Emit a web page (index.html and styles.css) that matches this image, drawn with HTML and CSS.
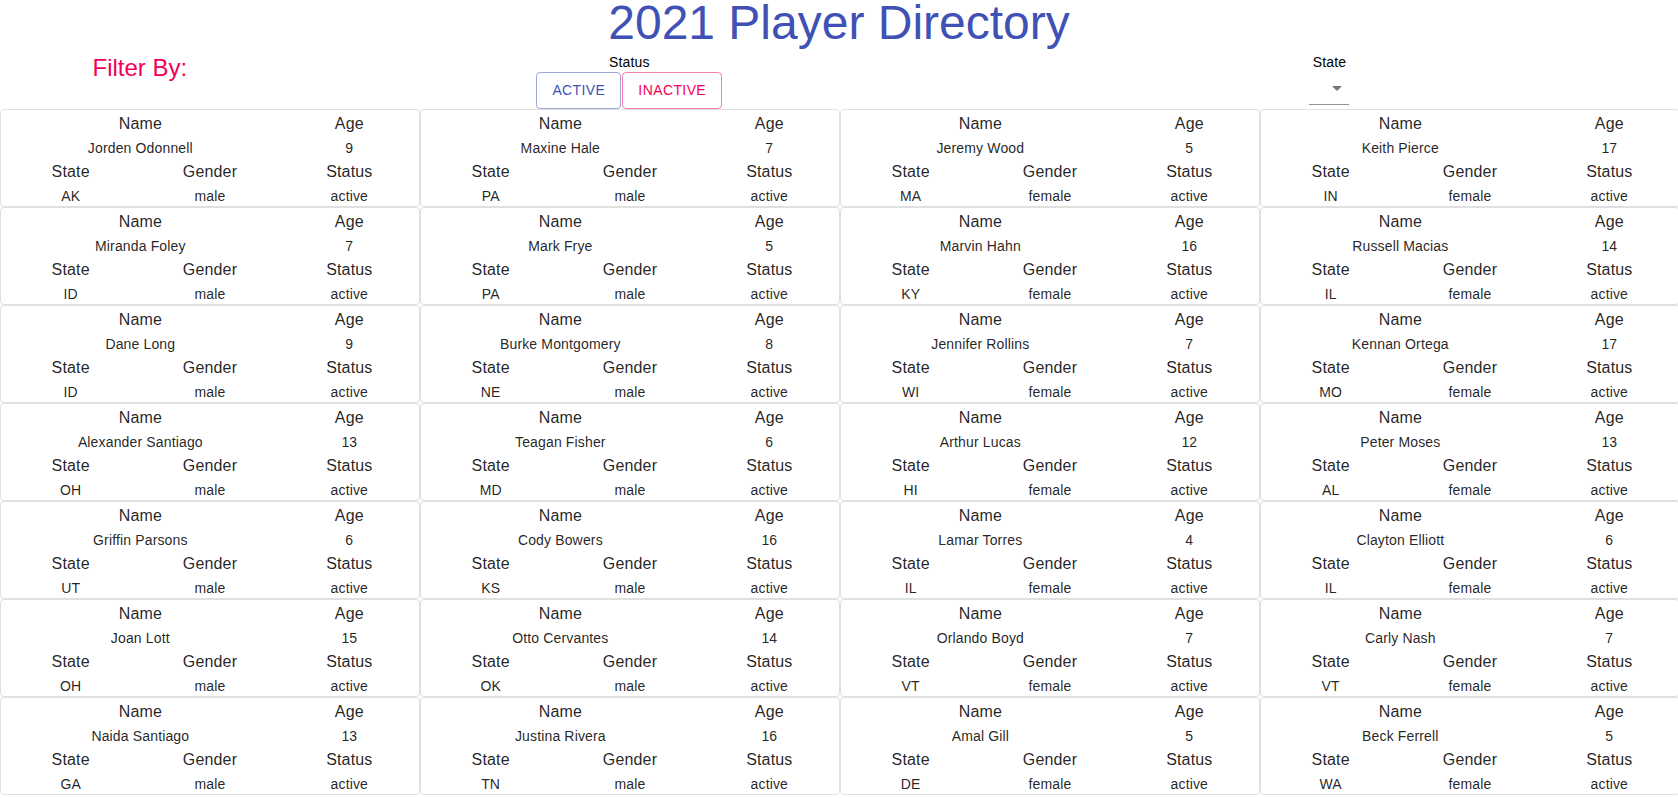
FILE: index.html
```html
<!DOCTYPE html>
<html lang="en">
<head>
<meta charset="utf-8">
<title>2021 Player Directory</title>
<link rel="stylesheet" href="styles.css">
</head>
<body>
<h1 class="title">2021 Player Directory</h1>
<div class="filters">
  <div class="filter-col">
    <div class="filter-by">Filter By:</div>
  </div>
  <div class="filter-col">
    <div class="filter-label">Status</div>
    <div class="btn-row">
      <button class="btn btn-primary">ACTIVE</button>
      <button class="btn btn-secondary">INACTIVE</button>
    </div>
  </div>
  <div class="filter-col state-col">
    <div class="filter-label">State</div>
    <div class="select">
      <svg class="select-icon" viewBox="0 0 24 24" width="24" height="24"><path d="M7 10l5 5 5-5z"/></svg>
    </div>
  </div>
</div>
<div class="cards" id="cards"></div>
<script src="app.js"></script>
</body>
</html>
```
FILE: app.js
```js
var players = [
  ["Jorden Odonnell",9,"AK","male"],["Maxine Hale",7,"PA","male"],["Jeremy Wood",5,"MA","female"],["Keith Pierce",17,"IN","female"],
  ["Miranda Foley",7,"ID","male"],["Mark Frye",5,"PA","male"],["Marvin Hahn",16,"KY","female"],["Russell Macias",14,"IL","female"],
  ["Dane Long",9,"ID","male"],["Burke Montgomery",8,"NE","male"],["Jennifer Rollins",7,"WI","female"],["Kennan Ortega",17,"MO","female"],
  ["Alexander Santiago",13,"OH","male"],["Teagan Fisher",6,"MD","male"],["Arthur Lucas",12,"HI","female"],["Peter Moses",13,"AL","female"],
  ["Griffin Parsons",6,"UT","male"],["Cody Bowers",16,"KS","male"],["Lamar Torres",4,"IL","female"],["Clayton Elliott",6,"IL","female"],
  ["Joan Lott",15,"OH","male"],["Otto Cervantes",14,"OK","male"],["Orlando Boyd",7,"VT","female"],["Carly Nash",7,"VT","female"],
  ["Naida Santiago",13,"GA","male"],["Justina Rivera",16,"TN","male"],["Amal Gill",5,"DE","female"],["Beck Ferrell",5,"WA","female"]
];
var html = "";
players.forEach(function (p) {
  html += '<div class="card">' +
    '<div class="h span2">Name</div><div class="h">Age</div>' +
    '<div class="v span2">' + p[0] + '</div><div class="v">' + p[1] + '</div>' +
    '<div class="h">State</div><div class="h">Gender</div><div class="h">Status</div>' +
    '<div class="v">' + p[2] + '</div><div class="v">' + p[3] + '</div><div class="v">active</div>' +
    '</div>';
});
document.getElementById("cards").innerHTML = html;
```
FILE: styles.css
```css
html, body {
  overflow: hidden;
}
body {
  margin: 0;
  font-family: "Liberation Sans", Arial, Helvetica, sans-serif;
  color: rgba(0, 0, 0, 0.87);
  background: #fff;
}
.title {
  margin: 0;
  font-size: 48px;
  line-height: 46px;
  font-weight: 400;
  text-align: center;
  color: #3f51b5;
}
.filters {
  display: grid;
  grid-template-columns: 2fr 5fr 5fr;
  padding-top: 6px;
}
.filter-col {
  display: flex;
  flex-direction: column;
  align-items: center;
}
.state-col {
  padding-left: 2px;
}
.filter-by {
  font-size: 24px;
  line-height: 32px;
  color: #f50057;
}
.filter-label {
  font-size: 14px;
  line-height: 20px;
  letter-spacing: 0.01071em;
  color: #000;
}
.btn-row {
  display: flex;
  gap: 1px;
}
.btn {
  font-family: inherit;
  font-size: 14px;
  line-height: 24.5px;
  letter-spacing: 0.02857em;
  font-weight: 400;
  padding: 5px 15px;
  border-radius: 4px;
  background: transparent;
  min-width: 64px;
}
.btn-primary {
  color: #3f51b5;
  border: 1px solid rgba(63, 81, 181, 0.5);
}
.btn-secondary {
  color: #f50057;
  border: 1px solid rgba(245, 0, 87, 0.5);
}
.select {
  position: relative;
  width: 40px;
  height: 32px;
  border-bottom: 1px solid rgba(0, 0, 0, 0.42);
}
.select-icon {
  position: absolute;
  right: 0;
  top: 4px;
  fill: rgba(0, 0, 0, 0.54);
}
.cards {
  display: grid;
  grid-template-columns: repeat(4, 420px);
}
.card {
  border: 1px solid #e0e0e0;
  border-radius: 4px;
  display: grid;
  grid-template-columns: repeat(3, 1fr);
  text-align: center;
}
.span2 {
  grid-column: span 2;
}
.h {
  font-size: 16px;
  line-height: 21px;
  padding-top: 3px;
  letter-spacing: 0.00938em;
}
.v {
  font-size: 14px;
  line-height: 20px;
  padding-top: 4px;
  letter-spacing: 0.01071em;
}
```
